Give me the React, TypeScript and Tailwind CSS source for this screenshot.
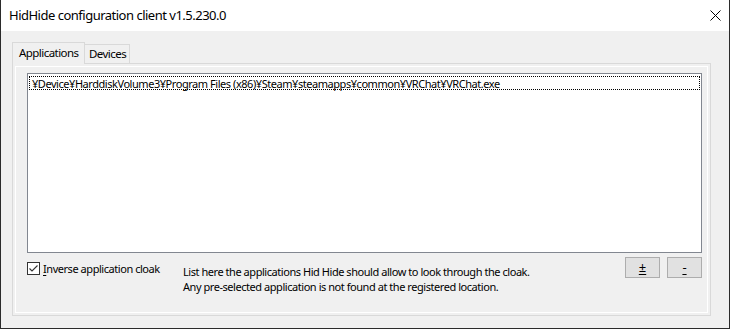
import React from "react";

const font = { fontFamily: '"Noto Sans", "Open Sans", sans-serif' };

export default function App() {
  return (
    <div
      className="w-[730px] h-[329px] bg-[#f0f0f0] border-x border-b border-[#2b2b2b] flex flex-col text-black overflow-hidden"
      style={font}
    >
      {/* Title bar */}
      <div className="h-[31px] bg-white flex items-center justify-between pl-[8px] shrink-0">
        <span className="text-[13px] tracking-[-0.5px] leading-none">
          HidHide configuration client v1.5.230.0
        </span>
        <svg width="11" height="11" viewBox="0 0 11 11" className="mr-[8px]">
          <path d="M0.5 0.5 L10.5 10.5 M10.5 0.5 L0.5 10.5" stroke="#000" strokeWidth="1" />
        </svg>
      </div>

      {/* Body */}
      <div className="flex-1 flex flex-col pt-[11px] pl-[11px] pr-[18px] pb-[12px] text-[11px] tracking-[-0.45px]">
        {/* Tabs */}
        <div className="h-[21px] flex items-end shrink-0 relative z-10 text-[11.5px] tracking-[-0.55px]">
          <div className="h-[22px] w-[73px] -mb-px bg-[#f0f0f0] border-t border-x border-[#d9d9d9] flex items-center pl-[6px] pb-[1px]">
            Applications
          </div>
          <div className="h-[19px] w-[45px] bg-[#f0f0f0] border-t border-r border-[#d9d9d9] flex items-center pl-[4px]">
            Devices
          </div>
        </div>

        {/* Panel */}
        <div className="flex-1 border border-[#d9d9d9] p-[2px] flex">
          <div className="flex-1 border border-white flex flex-col pt-[6px] pl-[11px] pr-[5px]">
            {/* List box */}
            <div className="h-[180px] border border-[#828790] bg-white pt-[2px] px-[1px]">
              <div className="h-[14px] border border-dotted border-black flex items-center pl-[2px] leading-none whitespace-nowrap">
                ¥Device¥HarddiskVolume3¥Program Files (x86)¥Steam¥steamapps¥common¥VRChat¥VRChat.exe
              </div>
            </div>

            {/* Bottom row */}
            <div className="mt-[4px] flex">
              <div className="w-[156px] flex items-start pt-[5px]">
                <div className="w-[13px] h-[13px] border border-[#333333] bg-white flex items-center justify-center shrink-0">
                  <svg width="11" height="11" viewBox="0 0 11 11">
                    <path d="M1.5 5.5 L4 8 L9.5 2.5" stroke="#333" strokeWidth="1.1" fill="none" />
                  </svg>
                </div>
                <span className="ml-[3px] leading-[13px]">
                  <span className="underline underline-offset-2">I</span>nverse application cloak
                </span>
              </div>
              <div className="flex-1 pt-[7px] leading-[15px]">
                <div>List here the applications Hid Hide should allow to look through the cloak.</div>
                <div>Any pre-selected application is not found at the registered location.</div>
              </div>
              <div className="flex gap-[7px] items-start text-[13px] tracking-normal">
                <button className="w-[35px] h-[21px] bg-[#e1e1e1] border border-[#adadad] flex items-center justify-center leading-none">
                  <span className="underline underline-offset-2">±</span>
                </button>
                <button className="w-[35px] h-[21px] bg-[#e1e1e1] border border-[#adadad] flex items-center justify-center leading-none">
                  <span className="underline underline-offset-2">-</span>
                </button>
              </div>
            </div>
          </div>
        </div>
      </div>
    </div>
  );
}
